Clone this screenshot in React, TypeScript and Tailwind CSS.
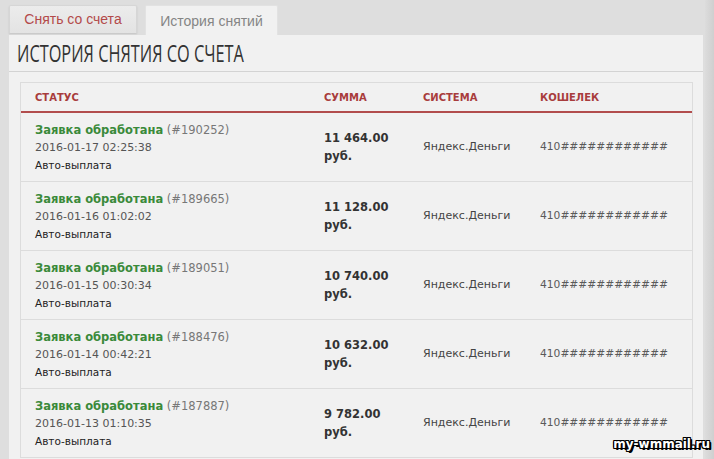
import React from "react";

type Row = { id: string; date: string; sum: string };

const rows: Row[] = [
  { id: "190252", date: "2016-01-17 02:25:38", sum: "11 464.00" },
  { id: "189665", date: "2016-01-16 01:02:02", sum: "11 128.00" },
  { id: "189051", date: "2016-01-15 00:30:34", sum: "10 740.00" },
  { id: "188476", date: "2016-01-14 00:42:21", sum: "10 632.00" },
  { id: "187887", date: "2016-01-13 01:10:35", sum: "9 782.00" },
];

const dv = "[font-family:'DejaVu_Sans',Verdana,sans-serif]";

export default function App() {
  return (
    <div className="relative h-[459px] w-[714px] overflow-hidden bg-[#dedede]">
      <div className="absolute right-0 top-0 h-full w-[9px] bg-gradient-to-r from-[#dcdcdc] to-[#cfcfcf]" />
      <div className="relative flex flex-col pl-[9px] pt-[5px]">
        {/* tabs */}
        <div className="flex items-end gap-[8px]">
          <div className="mb-[2px] flex h-[28px] w-[128px] items-center justify-center rounded-t-[2px] border border-b-0 border-[#d6d6d6] bg-gradient-to-b from-[#ececec] to-[#e3e3e3] shadow-[0_1px_2px_rgba(0,0,0,0.12)] [font-family:'Liberation_Sans',Arial,sans-serif] text-[14px] text-[#b34a4a]">
            Снять со счета
          </div>
          <div className="flex h-[30px] w-[133px] items-center justify-center rounded-t-[2px] border border-b-0 border-[#e2e2e2] bg-[#f1f1f1] pt-[1px] [font-family:'Liberation_Sans',Arial,sans-serif] text-[14px] text-[#858585]">
            История снятий
          </div>
        </div>
        {/* panel */}
        <div className="flex h-[430px] w-[694px] flex-col bg-[#f1f1f1]">
          <div className="flex h-[37px] items-center border-b border-[#d3d3d3] pl-[8px]">
            <span className="inline-block origin-left scale-x-[0.68] whitespace-nowrap [font-family:'Open_Sans',sans-serif] text-[24px] leading-none text-[#333333]">
              ИСТОРИЯ СНЯТИЯ СО СЧЕТА
            </span>
          </div>
          <div className="ml-[11px] mt-[10px] w-[673px] border-x border-t border-[#dcdcdc]">
            <div
              className={`grid h-[30px] grid-cols-[303px_99px_117px_1fr] items-center border-b-2 border-[#b24d4d] ${dv} text-[10px] font-bold text-[#a83c3c]`}
            >
              <div className="pl-[14px]">СТАТУС</div>
              <div>СУММА</div>
              <div>СИСТЕМА</div>
              <div>КОШЕЛЕК</div>
            </div>
            {rows.map((r) => (
              <div
                key={r.id}
                className={`grid h-[69px] grid-cols-[303px_99px_117px_1fr] items-center border-b border-[#dcdcdc] ${dv}`}
              >
                <div className="flex flex-col pl-[14px]">
                  <div className="text-[11.5px] leading-[18px]">
                    <span className="font-bold text-[#3a8a3a]">Заявка обработана</span>{" "}
                    <span className="text-[#777777]">(#{r.id})</span>
                  </div>
                  <div className="text-[11px] leading-[18px] text-[#555555]">{r.date}</div>
                  <div className="text-[10.5px] leading-[17px] text-[#222222]">Авто-выплата</div>
                </div>
                <div className="flex flex-col text-[11.5px] font-bold leading-[18px] text-[#333333]">
                  <span>{r.sum}</span>
                  <span>руб.</span>
                </div>
                <div className="text-[11px] text-[#444444]">Яндекс.Деньги</div>
                <div className="text-[10.7px] text-[#5a5a5a]">410############</div>
              </div>
            ))}
          </div>
        </div>
      </div>
      <div className="absolute bottom-[9px] right-[4px] [font-family:'DejaVu_Sans',sans-serif] text-[12px] font-bold leading-none text-white [text-shadow:1px_1px_0_#000,-1px_-1px_0_#000,1px_-1px_0_#000,-1px_1px_0_#000,0_1px_0_#000,0_-1px_0_#000,1px_0_0_#000,-1px_0_0_#000,2px_1px_0_#000,2px_2px_0_#000]">
        my-wmmail.ru
      </div>
    </div>
  );
}
